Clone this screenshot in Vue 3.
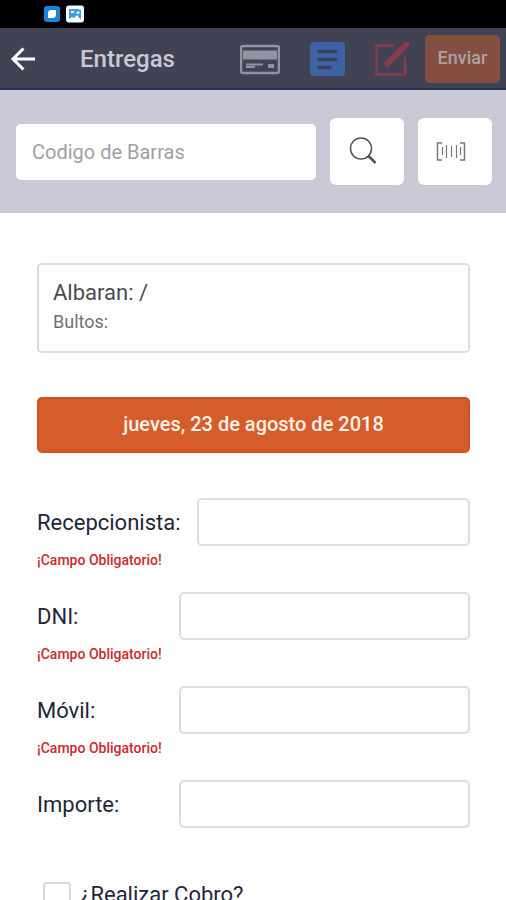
<script setup>
import { reactive, ref } from 'vue'

const barcode = ref('')
const charge = ref(false)
const form = reactive({ recepcionista: '', dni: '', movil: '', importe: '' })
const fields = [
  { id: 'recepcionista', label: 'Recepcionista:', required: true },
  { id: 'dni', label: 'DNI:', required: true },
  { id: 'movil', label: 'Móvil:', required: true },
  { id: 'importe', label: 'Importe:', required: false }
]
</script>

<template>
  <div class="screen">
    <div class="status">
      <svg width="18" height="18" viewBox="0 0 18 18" aria-hidden="true">
        <rect x="1" y="1" width="16" height="16" rx="3" fill="#1b83d6" />
        <path d="M7 5h6v6l-2 2H5V7z" fill="#fff" />
      </svg>
      <svg width="18" height="18" viewBox="0 0 18 18" aria-hidden="true">
        <rect x="0" y="0.500" width="18" height="17" rx="3" fill="#fff" />
        <path d="M3 4h9l3 1v9h-1l-3-4-3 3-2-1-3 2z" fill="#3d9fe2" />
        <path d="M5 6h3v2H5zM10 8l2-2 2 2-2 1z" fill="#fff" />
      </svg>
    </div>

    <header class="bar">
      <button class="icon back" type="button" aria-label="Volver">
        <svg width="26" height="26" viewBox="0 0 26 26" fill="none" stroke="#fff" stroke-width="3">
          <path d="M25 13H3M13.500 2.500L3 13l10.500 10.500" />
        </svg>
      </button>
      <h1>Entregas</h1>
      <nav class="actions">
        <button class="icon" type="button" aria-label="Tarjeta">
          <svg width="40" height="34" viewBox="0 0 40 34">
            <rect x="1" y="4" width="38" height="27" rx="2" fill="none" stroke="#9094a2" stroke-width="2.500" />
            <path d="M3 8.500h34v9H3z" fill="#9094a2" />
            <path d="M6 21.500h17v2H6zM6 24h9v2H6zM28 22h6v4h-6z" fill="#9094a2" />
          </svg>
        </button>
        <button class="icon" type="button" aria-label="Documento">
          <svg width="35" height="34" viewBox="0 0 35 34">
            <rect width="35" height="34" rx="4" fill="#3f62a6" />
            <path d="M9 9.500h17M9 17.500h17M9 25.500h11" stroke="#3a425b" stroke-width="3.500" stroke-linecap="round" />
          </svg>
        </button>
        <button class="icon" type="button" aria-label="Firmar">
          <svg width="36" height="34" viewBox="0 0 36 34" fill="none" stroke="#863d4b">
            <path d="M19 3.500H1.500v29H30V15" stroke-width="2.500" />
            <path d="M10 23.500L28 6" stroke-width="6" />
            <path d="M29.500 4.500l2-2" stroke-width="6" stroke-linecap="round" />
          </svg>
        </button>
      </nav>
      <button class="send" type="button">Enviar</button>
    </header>

    <form class="search" @submit.prevent>
      <input v-model="barcode" class="code" type="text" placeholder="Codigo de Barras" aria-label="Codigo de Barras" />
      <button class="tool" type="submit" aria-label="Buscar">
        <svg width="30" height="30" viewBox="0 0 30 30" fill="none" stroke="#50525a">
          <circle cx="13" cy="11.500" r="10.500" stroke-width="1.500" />
          <path d="M20 18.500l7.500 7.500" stroke-width="2.500" />
        </svg>
      </button>
      <button class="tool" type="button" aria-label="Escanear">
        <svg width="30" height="20" viewBox="0 0 30 20" fill="none" stroke="#77787c" stroke-width="1.500">
          <path d="M6 1H1.500v17H6M24 1h4.500v17H24" />
          <path d="M6.500 5v8M10.500 3v13M15.500 4v11M20.500 3v13M24.500 5v8" stroke-width="1.200" />
        </svg>
      </button>
    </form>

    <main class="content">
      <section class="note">
        <p class="albaran">Albaran: /</p>
        <p class="bultos">Bultos:</p>
      </section>

      <button class="date" type="button">jueves, 23 de agosto de 2018</button>

      <div class="fields">
        <div v-for="f in fields" :key="f.id" class="field">
          <div class="line">
            <label :for="f.id">{{ f.label }}</label>
            <input :id="f.id" v-model="form[f.id]" type="text" />
          </div>
          <p v-if="f.required" class="error">¡Campo Obligatorio!</p>
        </div>
        <label class="check">
          <input v-model="charge" type="checkbox" />
          <span>¿Realizar Cobro?</span>
        </label>
      </div>
    </main>
  </div>
</template>

<style>
body {
  margin: 0;
  background: #fff;
}
</style>

<style scoped>
.screen {
  display: flex;
  flex-direction: column;
  height: 100vh;
  overflow: hidden;
  font-family: Roboto, "Liberation Sans", sans-serif;
  color: #23263a;
}
.screen * {
  box-sizing: border-box;
}
button,
input {
  font-family: inherit;
}
h1,
p {
  margin: 0;
}
svg {
  display: block;
}
.status {
  display: flex;
  flex: none;
  align-items: center;
  gap: 5px;
  height: 28px;
  padding-left: 43px;
  background: #000;
}
.bar {
  display: flex;
  flex: none;
  align-items: center;
  height: 62px;
  padding: 2px 6px 0 10px;
  background: #414354;
  border-bottom: 2px solid #2b3252;
}
.icon {
  padding: 0;
  border: 0;
  background: none;
}
.back {
  margin-right: 44px;
}
h1 {
  flex: 1;
  font-size: 24px;
  font-weight: 500;
  line-height: 30px;
  color: #c8c9d6;
}
.actions {
  display: flex;
  gap: 30px;
  margin-right: 14px;
}
.send {
  width: 75px;
  height: 48px;
  padding: 0 0 4px;
  border: 0;
  border-radius: 5px;
  background: #844f41;
  color: #aaa2a5;
  font-size: 18px;
  font-weight: 500;
}
.search {
  display: flex;
  flex: none;
  align-items: center;
  gap: 14px;
  height: 123px;
  padding: 0 14px 0 16px;
  background: #cac9d6;
}
.code {
  flex: 1;
  min-width: 0;
  height: 56px;
  padding: 0 16px;
  border: 0;
  border-radius: 5px;
  background: #fff;
  font-size: 20px;
}
.code::placeholder {
  color: #a0a0a2;
  opacity: 1;
}
.tool {
  display: flex;
  align-items: center;
  width: 74px;
  height: 67px;
  padding: 0 18px;
  border: 0;
  border-radius: 6px;
  background: #fff;
}
.content {
  display: flex;
  flex: none;
  flex-direction: column;
  gap: 44px;
  padding: 50px 36px 24px 37px;
}
.note {
  height: 90px;
  padding: 13px 14px;
  border: 2px solid #dcdce2;
  border-radius: 5px;
}
.albaran {
  font-size: 22px;
  line-height: 30px;
  color: #4a4b50;
}
.bultos {
  font-size: 18px;
  line-height: 28px;
  color: #707176;
}
.date {
  height: 56px;
  padding: 0 0 2px;
  border: 2px solid #cf5320;
  border-radius: 5px;
  background: #d55d2b;
  color: #fff0e8;
  font-size: 20px;
  font-weight: 500;
}
.fields {
  display: flex;
  flex-direction: column;
  padding-top: 1px;
}
.field {
  height: 94px;
}
.line {
  display: flex;
  align-items: center;
  gap: 16px;
}
.line label {
  flex: none;
  min-width: 126px;
  font-size: 22px;
}
.line input {
  flex: 1;
  min-width: 0;
  height: 48px;
  padding: 0 12px;
  border: 2px solid #dddde0;
  border-radius: 5px;
  background: #fff;
  font-size: 20px;
}
.error {
  padding-top: 4px;
  font-size: 14px;
  font-weight: 500;
  line-height: 20px;
  color: #cb2a2e;
}
.check {
  display: flex;
  align-items: flex-start;
  gap: 9px;
  padding: 8px 6px 0;
  font-size: 22px;
  line-height: 26px;
}
.check input {
  appearance: none;
  width: 28px;
  height: 28px;
  margin: 0;
  border: 2px solid #d8d8dc;
  border-radius: 3px;
  background: #fff;
}
</style>
